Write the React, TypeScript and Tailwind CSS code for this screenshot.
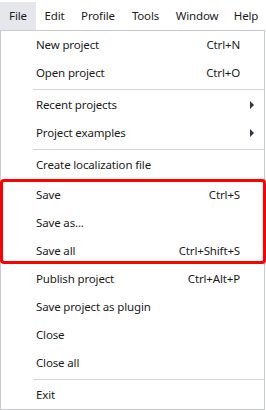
import React from "react";

interface Item {
  label: string;
  shortcut?: string;
  submenu?: boolean;
}

type Entry = Item | "sep";

const menuBar = [
  { name: "File", width: "w-[36px]" },
  { name: "Edit", width: "w-[37px]" },
  { name: "Profile", width: "w-[50px]" },
  { name: "Tools", width: "w-[45px]" },
  { name: "Window", width: "w-[58px]" },
  { name: "Help", width: "w-[40px]" },
];

const topItems: Entry[] = [
  { label: "New project", shortcut: "Ctrl+N" },
  { label: "Open project", shortcut: "Ctrl+O" },
  "sep",
  { label: "Recent projects", submenu: true },
  { label: "Project examples", submenu: true },
  "sep",
  { label: "Create localization file" },
];

const saveItems: Item[] = [
  { label: "Save", shortcut: "Ctrl+S" },
  { label: "Save as..." },
  { label: "Save all", shortcut: "Ctrl+Shift+S" },
];

const bottomItems: Entry[] = [
  { label: "Publish project", shortcut: "Ctrl+Alt+P" },
  { label: "Save project as plugin" },
  { label: "Close" },
  { label: "Close all" },
  "sep",
  { label: "Exit" },
];

function Row({ item }: { item: Item }) {
  return (
    <div className="flex h-[28px] items-center pl-[35px] text-[#1b1b1b]">
      <span className="flex-1">{item.label}</span>
      {item.shortcut && <span>{item.shortcut}</span>}
      <span className="flex w-[24px] pl-[10px]">
        {item.submenu && (
          <svg width="4" height="8" viewBox="0 0 4 8">
            <path d="M0 0 L4 4 L0 8 Z" fill="#2f3640" />
          </svg>
        )}
      </span>
    </div>
  );
}

function Separator() {
  return (
    <div className="flex h-[4px] items-center pl-[32px]">
      <div className="h-px flex-1 bg-[#d4d5da]" />
    </div>
  );
}

function renderEntries(entries: Entry[]) {
  return entries.map((entry, index) =>
    entry === "sep" ? (
      <Separator key={index} />
    ) : (
      <Row key={index} item={entry} />
    )
  );
}

export default function App() {
  return (
    <div
      className="h-[410px] w-[266px] overflow-hidden bg-white text-[11.5px] leading-none tracking-[-0.15px]"
      style={{ fontFamily: '"Noto Sans", "Open Sans", sans-serif' }}
    >
      {/* Menu bar */}
      <div className="flex h-[30px] items-end text-[#1b1b1b]">
        {menuBar.map((entry, index) => (
          <div
            key={entry.name}
            className={`flex h-[28px] items-center justify-center ${entry.width} ${
              index === 0 ? "bg-[#e6e7ec]" : ""
            }`}
          >
            {entry.name}
          </div>
        ))}
      </div>

      {/* Dropdown */}
      <div className="w-[265px] border border-[#c9cbd0]">
        {renderEntries(topItems)}

        <div className="relative">
          <div className="h-[2px]" />
          {saveItems.map((item, index) => (
            <Row key={index} item={item} />
          ))}
          <div className="absolute -left-px -right-[2px] top-0 bottom-[1px] rounded-[4px] border-[3px] border-[#ff0000]" />
        </div>

        {renderEntries(bottomItems)}
      </div>
    </div>
  );
}
